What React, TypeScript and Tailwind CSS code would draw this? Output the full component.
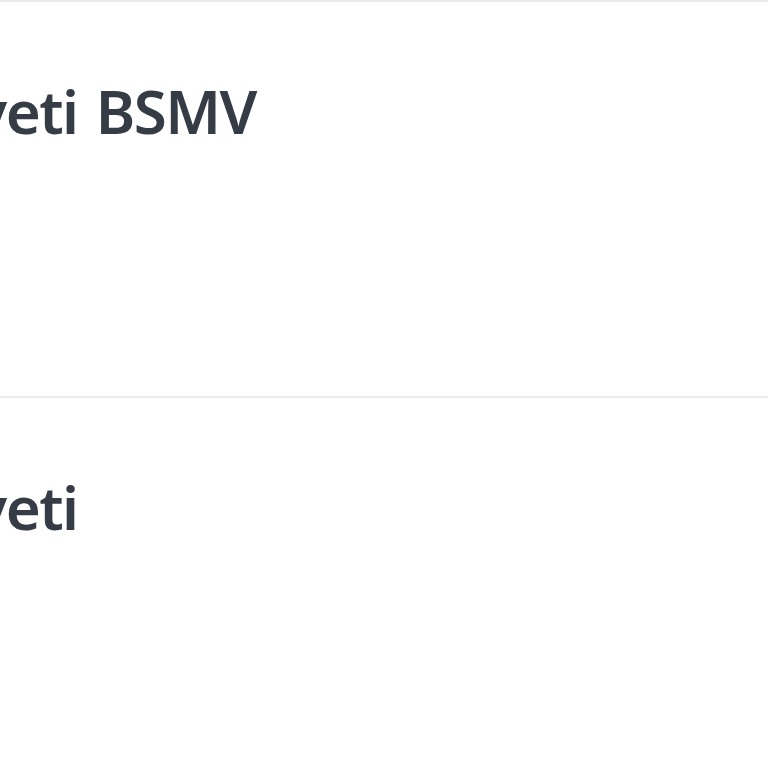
export default function App() {
  return (
    <div className="w-[768px] h-[768px] overflow-hidden bg-white border-t-2 border-[#ececec]" style={{ fontFamily: '"Noto Sans", "Open Sans", sans-serif' }}>
      <div className="h-[396px] border-b-2 border-[#e6ecf2] pt-[69px]">
        <div className="ml-[-102px] text-[60px] leading-[80px] tracking-[-1.5px] font-semibold text-[#353c46] whitespace-nowrap">
          Heyeti{" "}
          <span className="ml-[4px]">BSMV</span>
        </div>
      </div>
      <div className="h-[396px] border-b-2 border-[#e6ecf2] pt-[69px]">
        <div className="ml-[-102px] text-[60px] leading-[80px] tracking-[-1.5px] font-semibold text-[#353c46] whitespace-nowrap">
          Heyeti
        </div>
      </div>
    </div>
  );
}
